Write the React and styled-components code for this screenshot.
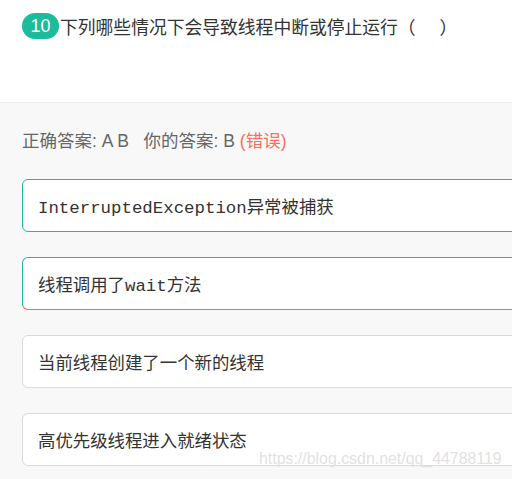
import React from 'react';
import styled, { createGlobalStyle } from 'styled-components';

const GlobalStyle = createGlobalStyle`
  html, body {
    margin: 0;
    padding: 0;
    overflow: hidden;
    background: #f8f8f8;
  }
  body {
    font-family: "Liberation Sans", "Noto Sans CJK SC", sans-serif;
  }
`;

const Page = styled.div`
  position: relative;
  width: 512px;
  height: 479px;
  overflow: hidden;
  background: #f8f8f8;
`;

const Header = styled.div`
  height: 103px;
  background: #fff;
  border-bottom: 1px solid #ececec;
  padding: 13px 0 0 22px;
  box-sizing: border-box;
`;

const TitleRow = styled.div`
  display: flex;
  align-items: center;
  gap: 1px;
`;

const Badge = styled.span`
  display: inline-flex;
  align-items: center;
  justify-content: center;
  width: 37px;
  height: 26px;
  border-radius: 13px;
  background: #1abc9c;
  color: #fff;
  font-size: 18px;
  font-family: "Liberation Sans", sans-serif;
`;

const Title = styled.span`
  font-size: 17.8px;
  line-height: 26px;
  color: #333;
  font-family: "Noto Sans CJK SC", sans-serif;
  white-space: pre;
`;

const Body = styled.div`
  padding: 26px 0 0 22px;
  display: flex;
  flex-direction: column;
`;

const Result = styled.div`
  font-size: 17.5px;
  line-height: 24px;
  color: #666;
  font-family: "Liberation Sans", "Noto Sans CJK SC", sans-serif;
  margin-bottom: 26px;
  white-space: pre;
`;

const Wrong = styled.span`
  color: #f7715c;
`;

const Options = styled.div`
  display: flex;
  flex-direction: column;
  gap: 25px;
`;

const Option = styled.div`
  width: 600px;
  height: 53px;
  box-sizing: border-box;
  display: flex;
  align-items: center;
  padding: 0 15px;
  background: #fff;
  border: 1px solid #dadada;
  border-color: ${p =>
    p.$state === 'correct'
      ? '#1abc9c'
      : p.$state === 'picked'
      ? '#1abc9c #1abc9c #f36a55 #1abc9c'
      : '#dadada'};
  border-radius: 6px;
  font-family: "Liberation Mono", "Noto Sans CJK SC", monospace;
  font-size: 17.4px;
  color: #333;
`;

const Watermark = styled.div`
  position: absolute;
  left: 259px;
  top: 450px;
  font-family: "Liberation Sans", sans-serif;
  font-size: 15.9px;
  color: #e2e2e2;
  pointer-events: none;
  white-space: nowrap;
`;

const options = [
  { text: 'InterruptedException异常被捕获', state: 'correct' },
  { text: '线程调用了wait方法', state: 'picked' },
  { text: '当前线程创建了一个新的线程', state: '' },
  { text: '高优先级线程进入就绪状态', state: '' },
];

export default function App() {
  return (
    <Page>
      <GlobalStyle />
      <Header>
        <TitleRow>
          <Badge>10</Badge>
          <Title>{'下列哪些情况下会导致线程中断或停止运行（      ）'}</Title>
        </TitleRow>
      </Header>
      <Body>
        <Result>
          {'正确答案: A B   你的答案: B '}
          <Wrong>(错误)</Wrong>
        </Result>
        <Options>
          {options.map(o => (
            <Option key={o.text} $state={o.state}>{o.text}</Option>
          ))}
        </Options>
      </Body>
      <Watermark>https://blog.csdn.net/qq_44788119</Watermark>
    </Page>
  );
}
